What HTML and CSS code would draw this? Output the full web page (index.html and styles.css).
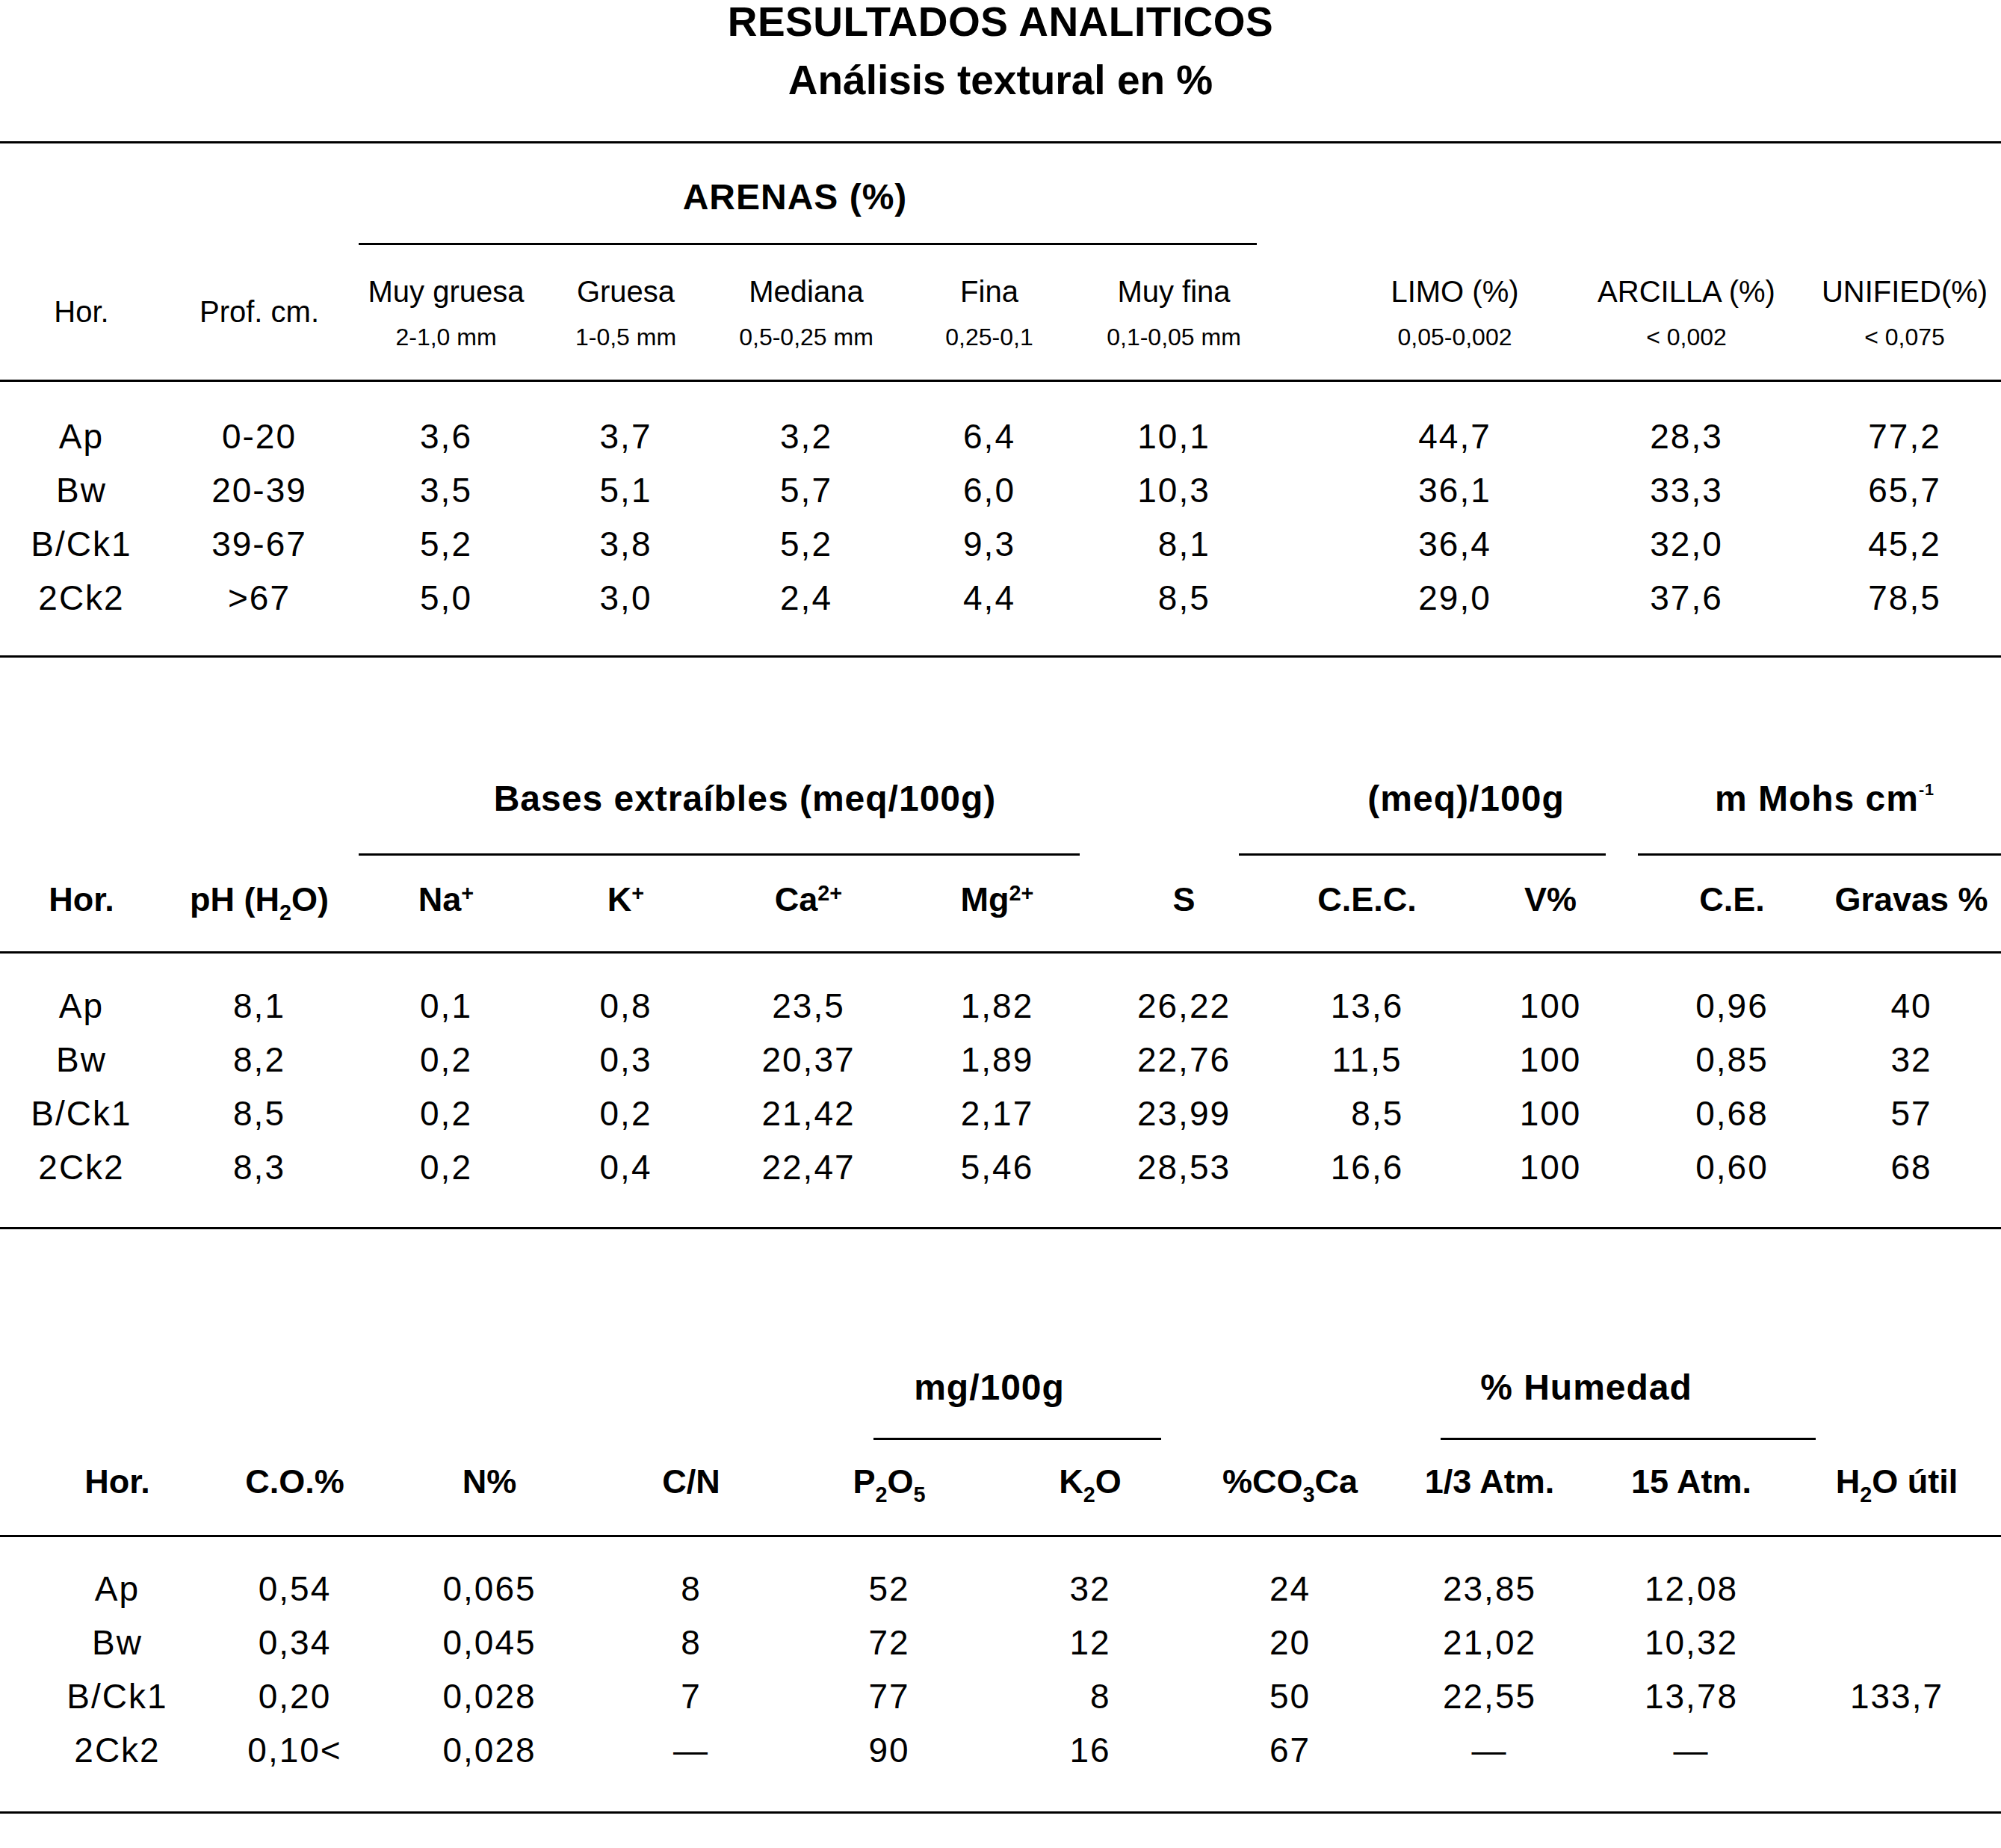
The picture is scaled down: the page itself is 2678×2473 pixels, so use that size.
FILE: index.html
```html
<!DOCTYPE html>
<html lang="es">
<head>
<meta charset="utf-8">
<title>Resultados analíticos</title>
<link rel="stylesheet" href="styles.css">
</head>
<body>
<header class="title">
  <h1>RESULTADOS ANALITICOS</h1>
  <h2>Análisis textural en %</h2>
</header>
<div class="rule"></div>

<section class="tbl t1">
  <div class="grp">
    <div class="lbl la">ARENAS (%)</div>
    <div class="ln ra"></div>
  </div>
  <div class="cols head">
    <div class="c">Hor.</div>
    <div class="c">Prof. cm.</div>
    <div class="c"><span class="nm">Muy gruesa</span><span class="sz">2-1,0 mm</span></div>
    <div class="c"><span class="nm">Gruesa</span><span class="sz">1-0,5 mm</span></div>
    <div class="c"><span class="nm">Mediana</span><span class="sz">0,5-0,25 mm</span></div>
    <div class="c"><span class="nm">Fina</span><span class="sz">0,25-0,1</span></div>
    <div class="c"><span class="nm">Muy fina</span><span class="sz">0,1-0,05 mm</span></div>
    <div class="c g"><span class="nm">LIMO (%)</span><span class="sz">0,05-0,002</span></div>
    <div class="c"><span class="nm">ARCILLA (%)</span><span class="sz">&lt; 0,002</span></div>
    <div class="c"><span class="nm">UNIFIED(%)</span><span class="sz">&lt; 0,075</span></div>
  </div>
  <div class="rule"></div>
  <div class="body">
    <div class="cols row"><span>Ap</span><span>0-20</span><span>3,6</span><span>3,7</span><span>3,2</span><span>6,4</span><span>10,1</span><span class="g">44,7</span><span>28,3</span><span>77,2</span></div>
    <div class="cols row"><span>Bw</span><span>20-39</span><span>3,5</span><span>5,1</span><span>5,7</span><span>6,0</span><span>10,3</span><span class="g">36,1</span><span>33,3</span><span>65,7</span></div>
    <div class="cols row"><span>B/Ck1</span><span>39-67</span><span>5,2</span><span>3,8</span><span>5,2</span><span>9,3</span><span class="p1">8,1</span><span class="g">36,4</span><span>32,0</span><span>45,2</span></div>
    <div class="cols row"><span>2Ck2</span><span>&gt;67</span><span>5,0</span><span>3,0</span><span>2,4</span><span>4,4</span><span class="p1">8,5</span><span class="g">29,0</span><span>37,6</span><span>78,5</span></div>
  </div>
  <div class="rule"></div>
</section>

<section class="tbl t2">
  <div class="grp">
    <div class="lbl la">Bases extraíbles (meq/100g)</div>
    <div class="ln ra"></div>
    <div class="lbl lb">(meq)/100g</div>
    <div class="ln rb"></div>
    <div class="lbl lc">m Mohs cm<span class="sup-s">-1</span></div>
    <div class="ln rc"></div>
  </div>
  <div class="cols head bold">
    <div class="c">Hor.</div>
    <div class="c">pH (H<span class="sub">2</span>O)</div>
    <div class="c">Na<span class="sup">+</span></div>
    <div class="c">K<span class="sup">+</span></div>
    <div class="c">Ca<span class="sup">2+</span></div>
    <div class="c">Mg<span class="sup">2+</span></div>
    <div class="c">S</div>
    <div class="c">C.E.C.</div>
    <div class="c">V%</div>
    <div class="c">C.E.</div>
    <div class="c">Gravas %</div>
  </div>
  <div class="rule"></div>
  <div class="body">
    <div class="cols row"><span>Ap</span><span>8,1</span><span>0,1</span><span>0,8</span><span>23,5</span><span>1,82</span><span>26,22</span><span>13,6</span><span>100</span><span>0,96</span><span>40</span></div>
    <div class="cols row"><span>Bw</span><span>8,2</span><span>0,2</span><span>0,3</span><span>20,37</span><span>1,89</span><span>22,76</span><span>11,5</span><span>100</span><span>0,85</span><span>32</span></div>
    <div class="cols row"><span>B/Ck1</span><span>8,5</span><span>0,2</span><span>0,2</span><span>21,42</span><span>2,17</span><span>23,99</span><span class="p1">8,5</span><span>100</span><span>0,68</span><span>57</span></div>
    <div class="cols row"><span>2Ck2</span><span>8,3</span><span>0,2</span><span>0,4</span><span>22,47</span><span>5,46</span><span>28,53</span><span>16,6</span><span>100</span><span>0,60</span><span>68</span></div>
  </div>
  <div class="rule"></div>
</section>

<section class="tbl t3">
  <div class="grp">
    <div class="lbl la">mg/100g</div>
    <div class="ln ra"></div>
    <div class="lbl lb">% Humedad</div>
    <div class="ln rb"></div>
  </div>
  <div class="cols head bold">
    <div class="c">Hor.</div>
    <div class="c">C.O.%</div>
    <div class="c">N%</div>
    <div class="c">C/N</div>
    <div class="c">P<span class="sub">2</span>O<span class="sub">5</span></div>
    <div class="c">K<span class="sub">2</span>O</div>
    <div class="c">%CO<span class="sub">3</span>Ca</div>
    <div class="c">1/3 Atm.</div>
    <div class="c">15 Atm.</div>
    <div class="c">H<span class="sub">2</span>O útil</div>
  </div>
  <div class="rule"></div>
  <div class="body">
    <div class="cols row"><span>Ap</span><span>0,54</span><span>0,065</span><span>8</span><span>52</span><span>32</span><span>24</span><span>23,85</span><span>12,08</span><span></span></div>
    <div class="cols row"><span>Bw</span><span>0,34</span><span>0,045</span><span>8</span><span>72</span><span>12</span><span>20</span><span>21,02</span><span>10,32</span><span></span></div>
    <div class="cols row"><span>B/Ck1</span><span>0,20</span><span>0,028</span><span>7</span><span>77</span><span class="p1">8</span><span>50</span><span>22,55</span><span>13,78</span><span>133,7</span></div>
    <div class="cols row"><span>2Ck2</span><span>0,10&lt;</span><span>0,028</span><span>—</span><span>90</span><span>16</span><span>67</span><span>—</span><span>—</span><span></span></div>
  </div>
  <div class="rule"></div>
</section>
</body>
</html>
```

FILE: styles.css
```css
* { box-sizing: border-box; }

html, body {
  margin: 0;
  padding: 0;
  background: #fff;
}

body {
  width: 2678px;
  overflow: hidden;
  font-family: "Liberation Sans", Arial, Helvetica, sans-serif;
  color: #000;
}

/* ---------- title ---------- */
.title {
  text-align: center;
  padding-bottom: 53px;
}
.title h1,
.title h2 {
  margin: 0;
  font-size: 55px;
  line-height: 58px;
  font-weight: 700;
}
.title h1 { letter-spacing: .5px; }
.title h2 { margin-top: 20px; }

.rule {
  height: 3px;
  background: #000;
}

/* ---------- group labels with their rules ---------- */
.grp {
  display: grid;
  grid-template-rows: auto auto;
}
.grp .lbl {
  grid-row: 1;
  font-size: 48px;
  line-height: 56px;
  letter-spacing: 1px;
  font-weight: 700;
  text-align: center;
  white-space: nowrap;
}
.grp .ln {
  grid-row: 2;
  height: 3px;
  background: #000;
}
.sup-s {
  font-size: .45em;
  vertical-align: .95em;
  line-height: 0;
}

.t1 .grp {
  padding-top: 44px;
  grid-template-columns: 480px 1168px 34px 996px;
}
.t1 .la { grid-column: 2 / 3; }
.t1 .ra { grid-column: 2 / 4; margin-top: 33px; }

.t2 .grp {
  margin-top: 161px;
  grid-template-columns: 480px 69px 896px 213px 117px 374px 43px 14px 472px;
}
.t2 .la { grid-column: 3 / 4; }
.t2 .ra { grid-column: 2 / 4; margin-top: 45px; }
.t2 .lb { grid-column: 6 / 7; }
.t2 .rb { grid-column: 5 / 7; margin-top: 45px; }
.t2 .lc { grid-column: 9 / 10; }
.t2 .rc { grid-column: 8 / 10; margin-top: 45px; }

.t3 .grp {
  margin-top: 184px;
  grid-template-columns: 1169px 310px 75px 374px 390px 112px 248px;
}
.t3 .la { grid-column: 2 / 3; }
.t3 .ra { grid-column: 2 / 4; margin-top: 39px; }
.t3 .lb { grid-column: 5 / 6; }
.t3 .rb { grid-column: 5 / 7; margin-top: 39px; }

/* ---------- column grids ---------- */
.cols {
  display: grid;
  align-items: center;
}
.cols > * {
  display: block;
  text-align: center;
  white-space: nowrap;
}

.t1 .cols { grid-template-columns: 218px 258px 242px 239px 244px 246px 248px 105px 294px 326px 258px; }
.t1 .g { grid-column: 9; }
.t2 .cols { grid-template-columns: 218px 258px 242px 239px 250px 255px 245px 245px 246px 240px 240px; }
.t3 .cols {
  padding-left: 41px;
  grid-template-columns: 232px 243px 278px 262px 268px 270px 265px 269px 271px 279px;
}

/* ---------- header rows ---------- */
.head {
  font-size: 40px;
  line-height: 48px;
}
.t1 .head { padding-top: 38px; padding-bottom: 40px; }
.head .nm {
  display: block;
  line-height: 48px;
}
.head .sz {
  display: block;
  font-size: 32px;
  line-height: 34px;
  margin-top: 20px;
}

.head.bold {
  font-size: 45px;
  line-height: 54px;
  font-weight: 700;
}
.t2 .head { padding-top: 32px; padding-bottom: 42px; }
.t3 .head { padding-top: 29px; padding-bottom: 44px; }

.sup {
  font-size: .64em;
  vertical-align: .5em;
  line-height: 0;
}
.sub {
  font-size: .64em;
  vertical-align: -.42em;
  line-height: 0;
}

/* ---------- data rows ---------- */
.body {
  font-size: 46px;
  letter-spacing: 2px;
}
.row {
  height: 72px;
  line-height: 72px;
}
.t1 .body { padding: 37px 0 41px; }
.t2 .body { padding: 34px 0 44px; }
.t3 .body { padding: 33px 0 46px; }

/* figure-width indent so short numbers align right with their column */
.row > .p1 { padding-left: .6em; }
```
